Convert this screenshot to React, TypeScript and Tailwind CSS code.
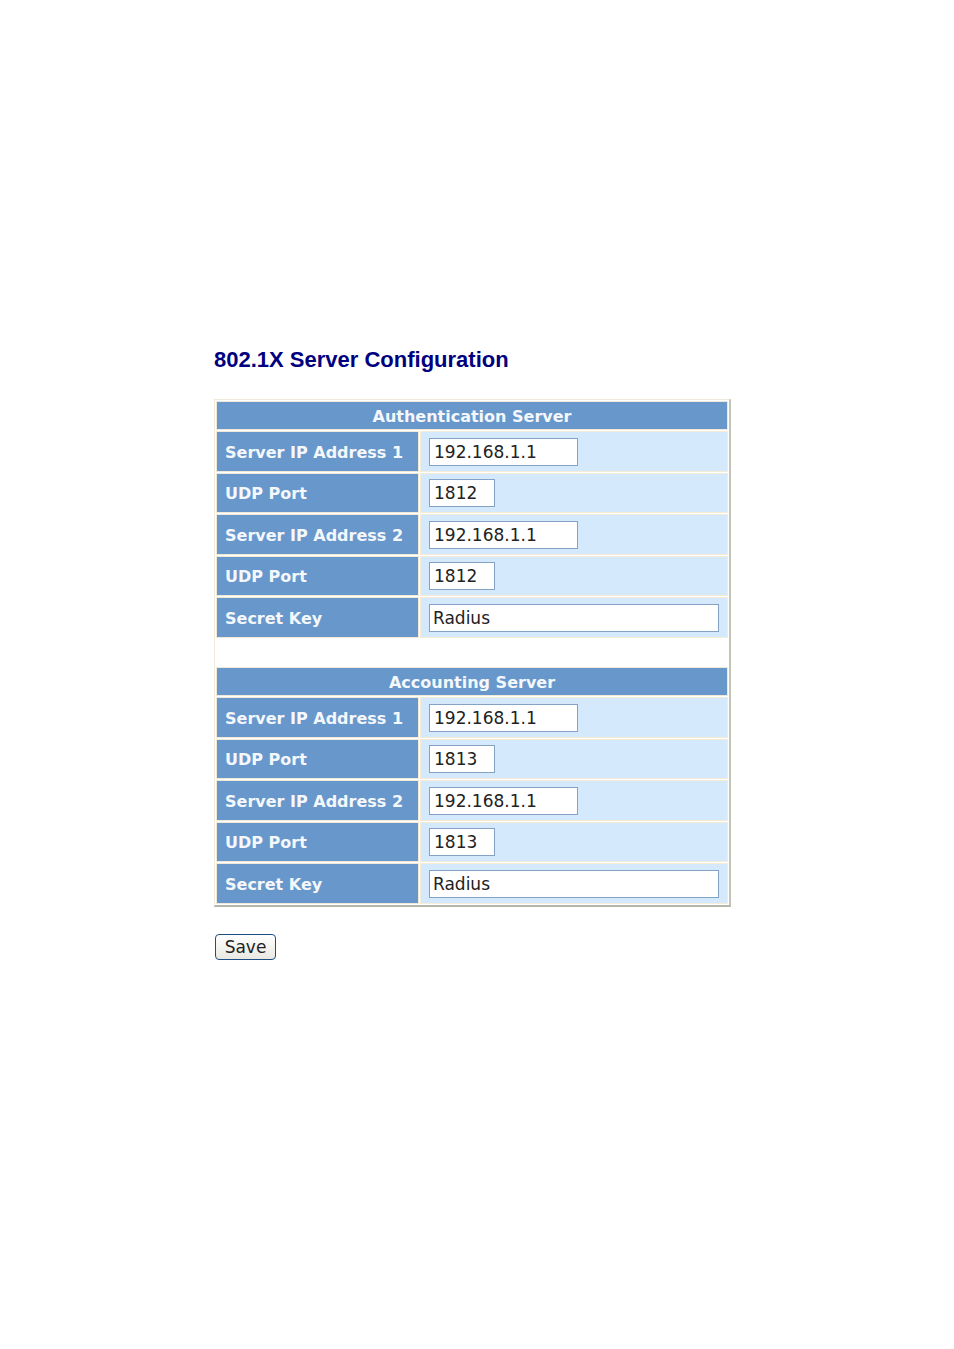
import React from "react";

type Field = { id: string; label: string; value: string; kind: "ip" | "port" | "key" };
type Section = { title: string; fields: Field[] };

const makeFields = (prefix: string, port: string): Field[] => [
  { id: `${prefix}-ip1`, label: "Server IP Address 1", value: "192.168.1.1", kind: "ip" },
  { id: `${prefix}-port1`, label: "UDP Port", value: port, kind: "port" },
  { id: `${prefix}-ip2`, label: "Server IP Address 2", value: "192.168.1.1", kind: "ip" },
  { id: `${prefix}-port2`, label: "UDP Port", value: port, kind: "port" },
  { id: `${prefix}-key`, label: "Secret Key", value: "Radius", kind: "key" },
];

const sections: Section[] = [
  { title: "Authentication Server", fields: makeFields("auth", "1812") },
  { title: "Accounting Server", fields: makeFields("acct", "1813") },
];

const inputWidth = { ip: "w-[149px] px-1", port: "w-[66px] px-1", key: "w-full px-[3px]" };
const rowHeight = { ip: "h-[41px]", port: "h-10", key: "h-[41px]" };

function ServerSection({ title, fields }: Section) {
  return (
    <tbody>
      <tr className="h-[29px]">
        <th
          colSpan={2}
          scope="colgroup"
          className="border border-[#f0e9d8] bg-[#6897cb] px-0 pt-0.5 pb-0 text-center font-bold leading-5 text-[#f4f8fc]"
        >
          {title}
        </th>
      </tr>
      {fields.map((f) => (
        <tr key={f.id} className={rowHeight[f.kind]}>
          <th
            scope="row"
            className="w-[203px] whitespace-nowrap border border-[#f0e9d8] bg-[#6897cb] px-2 pt-0.5 pb-0 text-left font-bold leading-5 text-[#f4f8fc]"
          >
            <label htmlFor={f.id}>{f.label}</label>
          </th>
          <td className="border border-[#f5ecd8] bg-[#d5e9fc] px-2 py-0">
            <input
              id={f.id}
              type="text"
              defaultValue={f.value}
              className={`block h-7 border border-[#84a3c4] bg-white text-[17px] text-[#222] outline-none ${inputWidth[f.kind]}`}
            />
          </td>
        </tr>
      ))}
    </tbody>
  );
}

export default function App() {
  return (
    <main className="min-h-screen bg-white px-[214px] pt-[346px] font-['DejaVu_Sans',sans-serif] text-base text-[#222]">
      <form className="w-full max-w-[517px]" onSubmit={(e) => e.preventDefault()}>
        <h1 className="whitespace-nowrap font-['Liberation_Sans',sans-serif] text-[22px] font-bold leading-7 text-[#00007f]">
          802.1X Server Configuration
        </h1>
        <table className="mt-[25px] w-full border-separate border-spacing-px border border-b-2 border-r-2 border-[#efe9dc] border-b-[#b5b5a8] border-r-[#c4c4b6] text-base">
          <ServerSection {...sections[0]} />
          <tbody>
            <tr className="h-[27px]">
              <td colSpan={2} className="p-0" />
            </tr>
          </tbody>
          <ServerSection {...sections[1]} />
        </table>
        <div className="px-px pt-[27px]">
          <button
            type="submit"
            className="block h-[26px] w-[61px] rounded border border-[#1d4f86] bg-linear-to-b from-white to-[#e9e8e1] text-[17px] leading-5"
          >
            Save
          </button>
        </div>
      </form>
    </main>
  );
}
